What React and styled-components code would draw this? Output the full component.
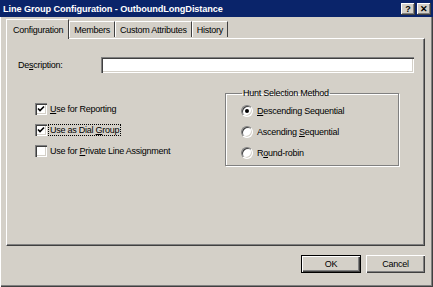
import React from 'react';
import styled, { createGlobalStyle } from 'styled-components';

const GlobalStyle = createGlobalStyle`
  html, body {
    margin: 0;
    padding: 0;
    background: #d4d0c8;
  }
  * {
    box-sizing: border-box;
  }
`;

const Window = styled.div`
  width: 433px;
  height: 287px;
  display: flex;
  flex-direction: column;
  background: #d4d0c8;
  font-family: 'Liberation Sans', Arial, sans-serif;
  font-size: 9px;
  letter-spacing: -0.25px;
  color: #000;
  overflow: hidden;
`;

const TitleBar = styled.div`
  height: 17px;
  flex: none;
  display: flex;
  align-items: center;
  padding: 0 2px 0 3px;
  background: #0a246a;
  color: #fff;
`;

const Title = styled.div`
  flex: 1;
  font-weight: bold;
  font-size: 9.2px;
  letter-spacing: -0.1px;
`;

const Caps = styled.div`
  display: flex;
  gap: 2px;
`;

const CapButton = styled.div`
  width: 14px;
  height: 12px;
  display: flex;
  align-items: center;
  justify-content: center;
  background: #d4d0c8;
  color: #000;
  font-weight: bold;
  font-size: 9px;
  letter-spacing: 0;
  box-shadow: inset -1px -1px #404040, inset 1px 1px #fff, inset -2px -2px #808080;
`;

const Body = styled.div`
  flex: 1;
  display: flex;
  flex-direction: column;
  padding: 2px 8px 0 6px;
  box-shadow: inset 1px 0 #fff, inset -1px -1px #404040, inset -2px -2px #808080;
`;

const TabStrip = styled.div`
  display: flex;
  align-items: flex-end;
  height: 19px;
  flex: none;
  padding-left: 1px;
  position: relative;
  z-index: 1;
`;

const Tab = styled.div`
  height: ${(p) => (p.$active ? '20px' : '16px')};
  margin-bottom: ${(p) => (p.$active ? '-1px' : '1px')};
  margin-left: ${(p) => (p.$active ? '-1px' : '0')};
  padding: ${(p) => (p.$active ? '0 5px 0 6px' : '0 4px')};
  display: flex;
  align-items: center;
  background: #d4d0c8;
  border-left: 1px solid #fff;
  border-top: 1px solid #fff;
  border-right: 1px solid #404040;
  white-space: nowrap;
`;

const Panel = styled.div`
  height: 208px;
  flex: none;
  display: flex;
  flex-direction: column;
  padding: 18px 10px 0 11px;
  border-left: 1px solid #fff;
  border-top: 1px solid #fff;
  border-right: 1px solid #404040;
  border-bottom: 1px solid #404040;
  box-shadow: inset -1px -1px #808080;
`;

const FieldRow = styled.div`
  display: flex;
  align-items: center;
`;

const Label = styled.div`
  width: 83px;
  flex: none;
`;

const TextBox = styled.div`
  flex: 1;
  height: 16px;
  background: #fff;
  box-shadow: inset 1px 1px #808080, inset 2px 2px #404040, inset -1px -1px #fff, inset -2px -2px #d4d0c8;
`;

const OptionsRow = styled.div`
  display: flex;
  align-items: flex-start;
  margin-top: 15px;
`;

const CheckList = styled.div`
  display: flex;
  flex-direction: column;
  padding-left: 17px;
  margin-top: 10px;
  width: 207px;
`;

const OptionRow = styled.div`
  height: 21px;
  display: flex;
  align-items: center;
  gap: ${(p) => (p.$gap ? `${p.$gap}px` : '3px')};
`;

const CheckBox = styled.span`
  width: 12px;
  height: 12px;
  flex: none;
  display: flex;
  align-items: center;
  justify-content: center;
  background: #fff;
  box-shadow: inset 1px 1px #808080, inset 2px 2px #404040, inset -1px -1px #fff, inset -2px -2px #d4d0c8;
`;

const Focus = styled.span`
  outline: 1px dotted #000;
  outline-offset: 0;
  padding: 0 1px;
  margin-left: -1px;
`;

const GroupBox = styled.fieldset`
  width: 174px;
  height: 78px;
  margin: 0;
  padding: 2px 0 0 15px;
  border: 1px solid #808080;
  box-shadow: 1px 1px 0 #fff, inset 1px 1px 0 #fff;
`;

const Legend = styled.legend`
  padding: 0 1px;
  margin-left: 1px;
`;

const Radio = styled.span`
  width: 12px;
  height: 12px;
  flex: none;
  border-radius: 50%;
  display: flex;
  align-items: center;
  justify-content: center;
  background: #fff;
  border: 1px solid;
  border-color: #808080 #fff #fff #808080;
  box-shadow: inset 1px 1px #404040, inset -1px -1px #d4d0c8;
`;

const Dot = styled.span`
  width: 4px;
  height: 4px;
  border-radius: 50%;
  background: #000;
`;

const Footer = styled.div`
  display: flex;
  justify-content: flex-end;
  gap: 5px;
  padding-top: 9px;
`;

const Button = styled.div`
  width: ${(p) => (p.$default ? '60px' : '59px')};
  height: 18px;
  display: flex;
  align-items: center;
  justify-content: center;
  background: #d4d0c8;
  border: ${(p) => (p.$default ? '1px solid #000' : 'none')};
  box-shadow: inset 1px 1px #fff, inset -1px -1px #404040, inset -2px -2px #808080;
`;

const U = styled.span`
  text-decoration: underline;
`;

function Check() {
  return (
    <svg width="8" height="8" viewBox="0 0 8 8">
      <path d="M1 3.5 L3 5.5 L7 1.5" fill="none" stroke="#000" strokeWidth="1.6" />
    </svg>
  );
}

export default function App() {
  return (
    <>
      <GlobalStyle />
      <Window>
        <TitleBar>
          <Title>Line Group Configuration - OutboundLongDistance</Title>
          <Caps>
            <CapButton>?</CapButton>
            <CapButton>✕</CapButton>
          </Caps>
        </TitleBar>
        <Body>
          <TabStrip>
            <Tab $active>Configuration</Tab>
            <Tab>Members</Tab>
            <Tab>Custom Attributes</Tab>
            <Tab>History</Tab>
          </TabStrip>
          <Panel>
            <FieldRow>
              <Label>
                De<U>s</U>cription:
              </Label>
              <TextBox />
            </FieldRow>
            <OptionsRow>
              <CheckList>
                <OptionRow>
                  <CheckBox>
                    <Check />
                  </CheckBox>
                  <span>
                    <U>U</U>se for Reporting
                  </span>
                </OptionRow>
                <OptionRow>
                  <CheckBox>
                    <Check />
                  </CheckBox>
                  <Focus>
                    Use as Dial <U>G</U>roup
                  </Focus>
                </OptionRow>
                <OptionRow>
                  <CheckBox />
                  <span>
                    Use for <U>P</U>rivate Line Assignment
                  </span>
                </OptionRow>
              </CheckList>
              <GroupBox>
                <Legend>Hunt Selection Method</Legend>
                <OptionRow $gap={4}>
                  <Radio>
                    <Dot />
                  </Radio>
                  <span>
                    <U>D</U>escending Sequential
                  </span>
                </OptionRow>
                <OptionRow $gap={4}>
                  <Radio />
                  <span>
                    Ascending <U>S</U>equential
                  </span>
                </OptionRow>
                <OptionRow $gap={4}>
                  <Radio />
                  <span>
                    R<U>o</U>und-robin
                  </span>
                </OptionRow>
              </GroupBox>
            </OptionsRow>
          </Panel>
          <Footer>
            <Button $default>OK</Button>
            <Button>Cancel</Button>
          </Footer>
        </Body>
      </Window>
    </>
  );
}
